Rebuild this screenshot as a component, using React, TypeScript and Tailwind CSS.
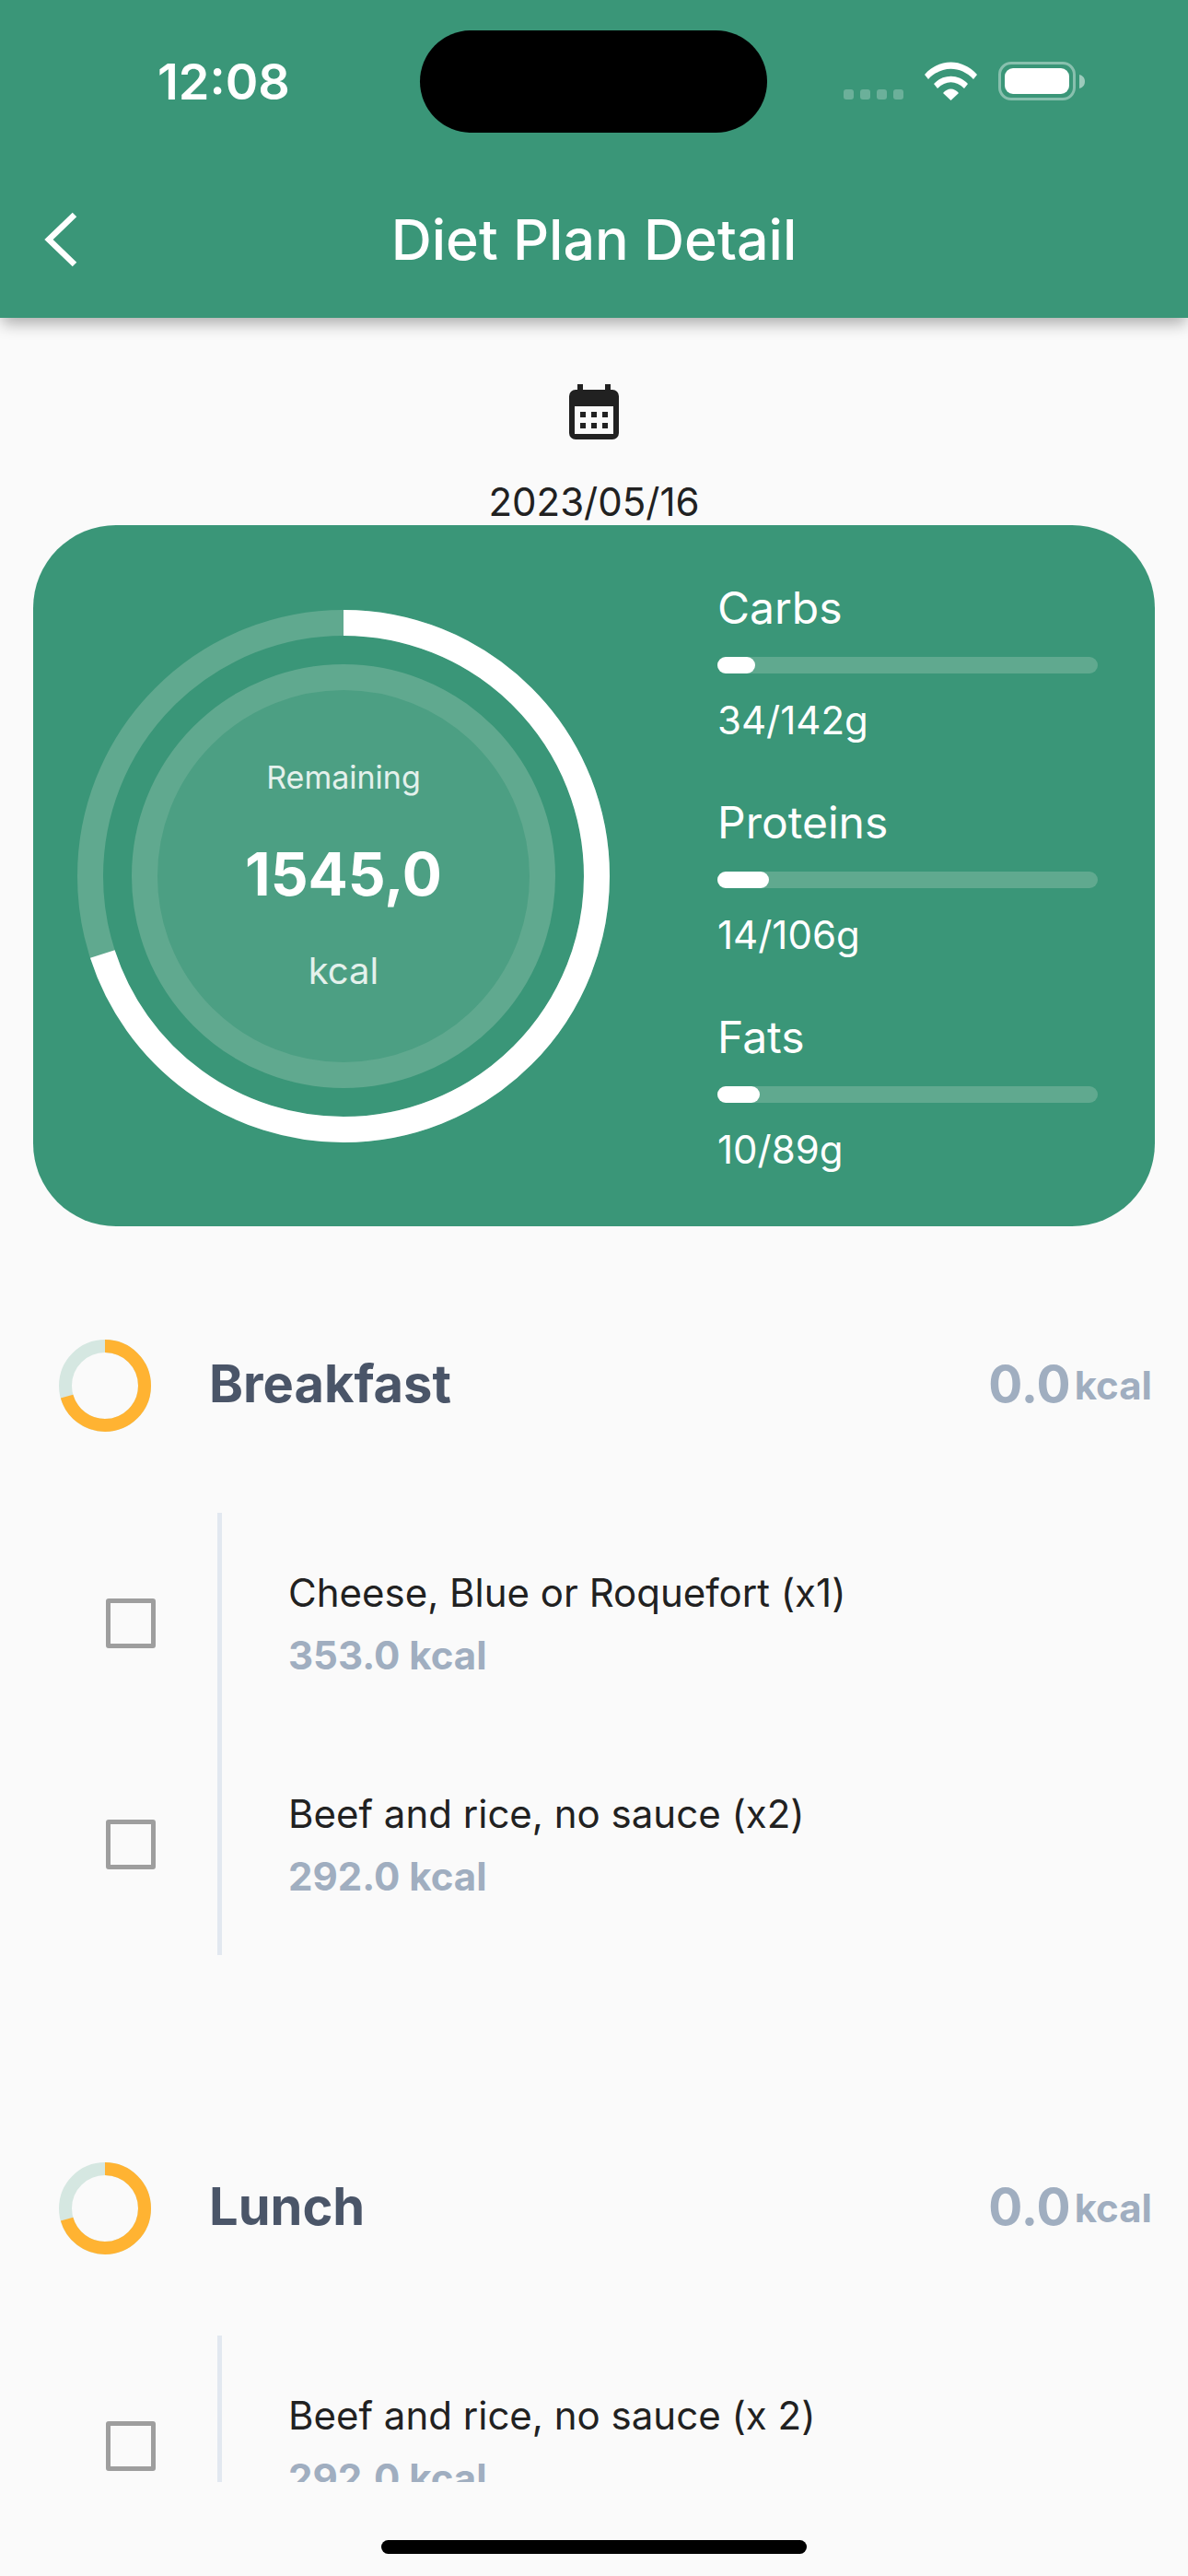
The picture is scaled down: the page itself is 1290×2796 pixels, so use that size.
import React from 'react';

const macros = [
  { name: 'Carbs', value: '34/142g', fill: 41 },
  { name: 'Proteins', value: '14/106g', fill: 56 },
  { name: 'Fats', value: '10/89g', fill: 46 },
];

const meals = [
  {
    name: 'Breakfast',
    items: [
      { name: 'Cheese, Blue or Roquefort (x1)', kcal: '353.0 kcal' },
      { name: 'Beef and rice, no sauce (x2)', kcal: '292.0 kcal' },
    ],
  },
  {
    name: 'Lunch',
    items: [{ name: 'Beef and rice, no sauce (x 2)', kcal: '292.0 kcal' }],
  },
];

const StatusIcons = () => (
  <div className="flex items-end">
    <div className="flex gap-[7px] pb-[1px]">
      {[0, 1, 2, 3].map((i) => (
        <div key={i} className="w-[11px] h-[11px] rounded-[3px] bg-white/25" />
      ))}
    </div>
    <svg className="ml-[23px]" width="57" height="42" viewBox="0 0 57 42">
      <path d="M0 14 C16 -4 41 -4 57 14 L53 19 C39 4 18 4 4 19 Z" fill="#fff" />
      <path d="M10 24 C20 13 37 13 47 24 L43 29 C34 20 23 20 14 29 Z" fill="#fff" />
      <path d="M20 34 C25 28 32 28 37 34 L28.500 42 Z" fill="#fff" />
    </svg>
    <div className="ml-[23px] w-[84px] h-[42px] rounded-[14px] border-[3px] border-white/40 p-[4px]">
      <div className="w-full h-full rounded-[9px] bg-white" />
    </div>
    <svg className="ml-[4px] mb-[13px]" width="6" height="15" viewBox="0 0 6 15">
      <path d="M0 0 C4 1 6 4 6 7.500 C6 11 4 14 0 15 Z" fill="#fff" fillOpacity="0.5" />
    </svg>
  </div>
);

const CalendarIcon = () => (
  <svg width="54" height="60" viewBox="0 0 54 60" fill="#212121">
    <rect x="9" y="0" width="6" height="8" />
    <rect x="39" y="0" width="6" height="8" />
    <path d="M7 6 H47 A7 7 0 0 1 54 13 V53 A7 7 0 0 1 47 60 H7 A7 7 0 0 1 0 53 V13 A7 7 0 0 1 7 6 Z M6 24 V54 H48 V24 Z" fillRule="evenodd" />
    <rect x="12" y="30" width="6" height="6" />
    <rect x="24" y="30" width="6" height="6" />
    <rect x="36" y="30" width="6" height="6" />
    <rect x="12" y="42" width="6" height="6" />
    <rect x="24" y="42" width="6" height="6" />
    <rect x="36" y="42" width="6" height="6" />
  </svg>
);

const CalorieRing = () => {
  const r = 275;
  const c = 2 * Math.PI * r;
  return (
    <div className="relative w-[578px] h-[578px] shrink-0">
      <svg width="578" height="578" viewBox="0 0 578 578">
        <circle cx="289" cy="289" r={r} fill="none" stroke="#60a98f" strokeWidth="28" />
        <circle
          cx="289"
          cy="289"
          r={r}
          fill="none"
          stroke="#fff"
          strokeWidth="28"
          strokeDasharray={`${c * 0.7} ${c}`}
          transform="rotate(-90 289 289)"
        />
        <circle cx="289" cy="289" r="216" fill="#4c9f83" stroke="#60a98f" strokeWidth="28" />
      </svg>
      <div className="absolute inset-0 flex flex-col items-center">
        <div className="mt-[158px] h-[48px] leading-[48px] text-[34px] text-white/85">Remaining</div>
        <div className="mt-[46px] h-[70px] leading-[70px] text-[64px] font-bold text-white">1545,0</div>
        <div className="mt-[45px] h-[50px] leading-[50px] text-[40px] text-white/85">kcal</div>
      </div>
    </div>
  );
};

const Donut = () => {
  const r = 43;
  const c = 2 * Math.PI * r;
  return (
    <svg width="100" height="100" viewBox="0 0 100 100" className="shrink-0">
      <circle cx="50" cy="50" r={r} fill="none" stroke="#d5e7e1" strokeWidth="14" />
      <circle
        cx="50"
        cy="50"
        r={r}
        fill="none"
        stroke="#ffb332"
        strokeWidth="14"
        strokeDasharray={`${c * 0.705} ${c}`}
        transform="rotate(-90 50 50)"
      />
    </svg>
  );
};

const MealSection = ({ meal }: { meal: (typeof meals)[number] }) => (
  <section className="pb-[225px]">
    <div className="flex items-center h-[100px] pl-[64px] pr-[39px]">
      <Donut />
      <div className="ml-[63px] mb-[5px] flex-1 text-[56px] font-bold text-[#4a5568]">{meal.name}</div>
      <div className="flex items-baseline gap-[4px] mb-[3px] font-bold text-[#a0aec0]">
        <span className="text-[55px]">0.0</span>
        <span className="text-[42px] -translate-y-[3px]">kcal</span>
      </div>
    </div>
    <div className="mt-[88px] ml-[115px]">
      {meal.items.map((item, i) => (
        <div key={i} className="flex h-[240px] items-center">
          <div className="w-[54px] h-[54px] rounded-[3px] border-[5px] border-[#9e9e9e]" />
          <div className="ml-[67px] h-full w-[5px] bg-[#e2e8f0]" />
          <div className="ml-[72px] mb-[-1px]">
            <div className="h-[50px] leading-[50px] text-[42px] text-[#212121]">{item.name}</div>
            <div className="mt-[18px] h-[50px] leading-[50px] text-[42px] font-bold text-[#a0aec0]">{item.kcal}</div>
          </div>
        </div>
      ))}
    </div>
  </section>
);

export default function App() {
  return (
    <div className="w-[1290px] h-[2796px] bg-[#fafafa] flex flex-col overflow-hidden font-['Inter',sans-serif]">
      <header className="relative z-10 h-[345px] shrink-0 bg-[#3a9678] shadow-[0_8px_16px_-2px_rgba(0,0,0,0.32)]">
        <div className="flex items-center h-[111px] mt-[33px] pt-0">
          <div className="w-[456px] pl-[171px] text-[54px] font-semibold text-white leading-none">12:08</div>
          <div className="w-[377px] h-[111px] rounded-full bg-black" />
          <div className="ml-[83px] mt-[-2px]">
            <StatusIcons />
          </div>
        </div>
        <div className="relative flex items-center justify-center h-[80px] mt-[76px]">
          <svg className="absolute left-[48px] top-[10px]" width="36" height="60" viewBox="0 0 36 60">
            <path d="M33 3 L5 30 L33 57" fill="none" stroke="#fff" strokeWidth="6.500" />
          </svg>
          <h1 className="pt-[2px] text-[61px] font-medium text-white">Diet Plan Detail</h1>
        </div>
      </header>

      <main className="h-[2349px] shrink-0 overflow-hidden">
        <div className="flex flex-col items-center pt-[72px]">
          <CalendarIcon />
          <div className="mt-[43px] h-[50px] leading-[50px] text-[42px] text-[#212121]">2023/05/16</div>
        </div>
        <div className="mx-[36px] h-[761px] rounded-[90px] bg-[#3a9678] flex items-center pl-[48px]">
          <CalorieRing />
          <div className="ml-[117px] w-[413px] text-white">
            {macros.map((m) => (
              <div key={m.name} className="h-[233px] last:h-auto">
                <div className="pt-[1px] h-[60px] leading-[60px] text-[48px]">{m.name}</div>
                <div className="mt-[24px] h-[18px] rounded-full bg-[#60a98f]">
                  <div className="h-full rounded-full bg-white" style={{ width: m.fill }} />
                </div>
                <div className="mt-[26px] h-[50px] leading-[50px] text-[42px]">{m.value}</div>
              </div>
            ))}
          </div>
        </div>
        <div className="mt-[123px]">
          {meals.map((meal) => (
            <MealSection key={meal.name} meal={meal} />
          ))}
        </div>
      </main>

      <div className="flex-1 flex justify-center pt-[63px]">
        <div className="w-[462px] h-[15px] rounded-full bg-black" />
      </div>
    </div>
  );
}
